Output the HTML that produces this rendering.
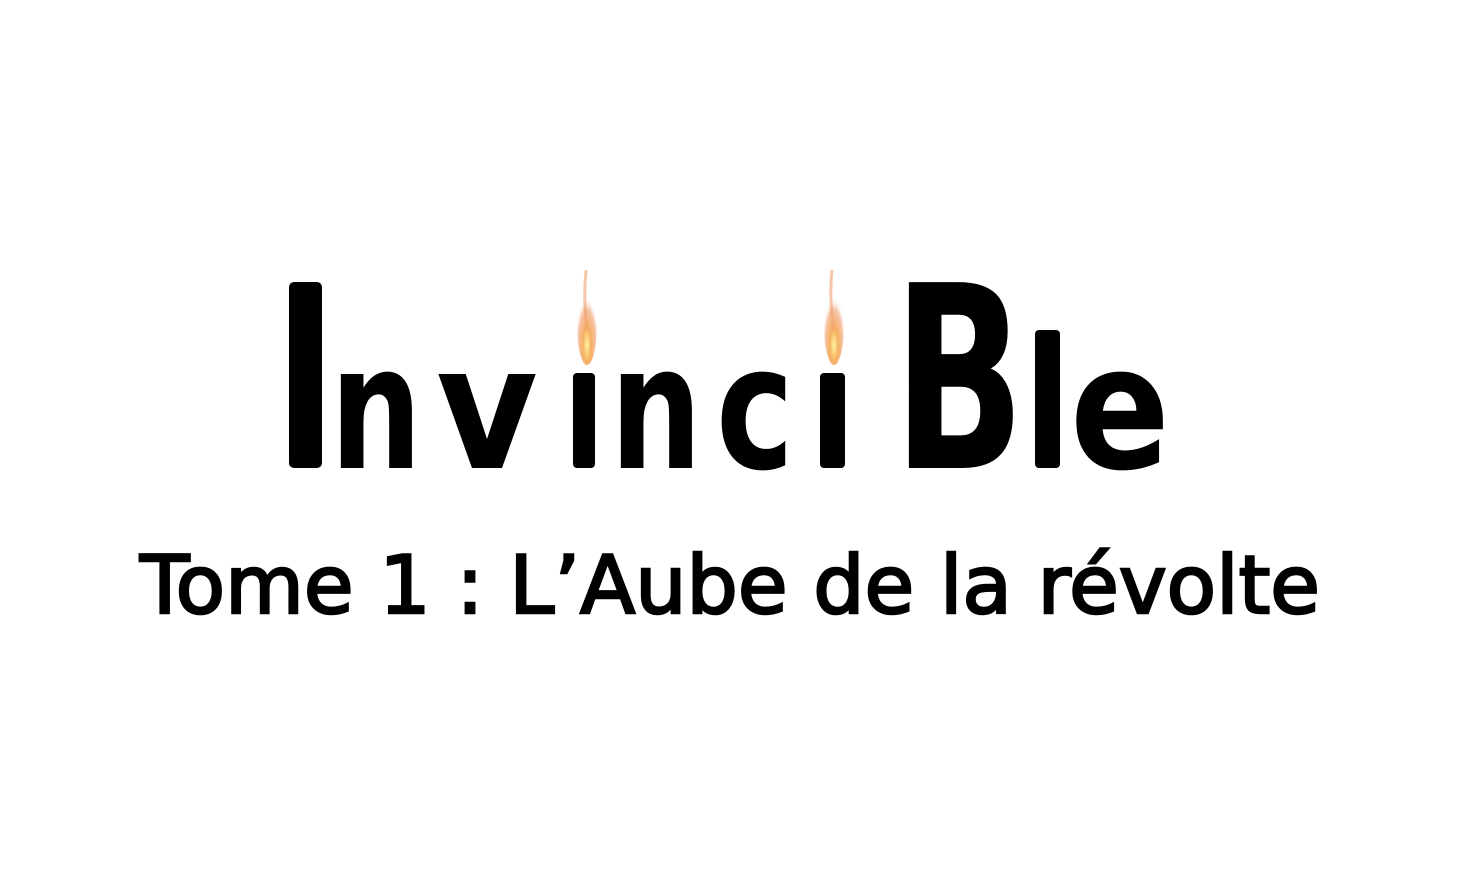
<!DOCTYPE html>
<html><head><meta charset="utf-8"><style>
html,body{margin:0;padding:0;background:#fff;width:1459px;height:876px;overflow:hidden}
svg{display:block}
</style></head><body>
<svg width="1459" height="876" viewBox="0 0 1459 876" xmlns="http://www.w3.org/2000/svg">
<defs>
<radialGradient id="fl" cx="0.5" cy="0.75" r="0.6">
<stop offset="0" stop-color="#fff3a0"/>
<stop offset="0.35" stop-color="#f5b060"/>
<stop offset="0.75" stop-color="#f0a070" stop-opacity="0.6"/>
<stop offset="1" stop-color="#fff" stop-opacity="0"/>
</radialGradient>
</defs>
<rect width="1459" height="876" fill="#fff"/>
<g fill="#000" font-family="DejaVu Sans, sans-serif" font-weight="bold" font-size="172">
<rect x="289" y="282" width="33" height="186" rx="5"/>
<text x="330" y="468" textLength="92" lengthAdjust="spacingAndGlyphs">n</text>
<text x="436" y="468" textLength="102" lengthAdjust="spacingAndGlyphs">v</text>
<rect x="573" y="373" width="22" height="95" rx="4"/>
<text x="610" y="468" textLength="92" lengthAdjust="spacingAndGlyphs">n</text>
<text x="716" y="468" textLength="78" lengthAdjust="spacingAndGlyphs">c</text>
<rect x="820" y="373" width="25" height="95" rx="4"/>
<text x="893" y="468" font-size="255" textLength="132" lengthAdjust="spacingAndGlyphs">B</text>
<rect x="1035" y="330" width="25" height="138" rx="4"/>
<text x="1070" y="468" textLength="100" lengthAdjust="spacingAndGlyphs">e</text>
</g>
<ellipse cx="587" cy="325" rx="10" ry="40" fill="url(#fl)"/>
<ellipse cx="834" cy="325" rx="10" ry="40" fill="url(#fl)"/>
<path d="M586 270 Q583 300 587 330" stroke="#f0a070" stroke-width="3" fill="none" opacity="0.6"/>
<path d="M832 270 Q829 300 834 330" stroke="#f0a070" stroke-width="3" fill="none" opacity="0.6"/>
<text x="140" y="613" font-family="DejaVu Sans, sans-serif" font-size="80" stroke="#000" stroke-width="2.5" textLength="1180" lengthAdjust="spacingAndGlyphs" fill="#000">Tome 1 : L’Aube de la révolte</text>
</svg>
</body></html>
